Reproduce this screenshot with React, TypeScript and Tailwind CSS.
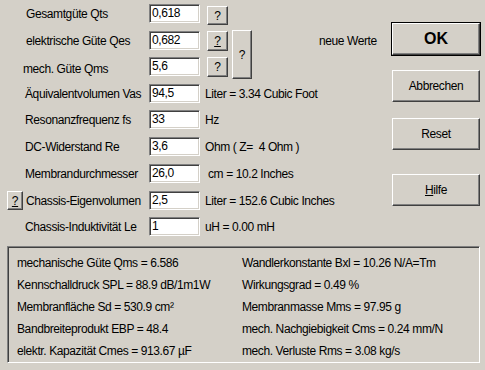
import React from "react";

const font = { fontFamily: '"Liberation Sans", Arial, sans-serif' };

function Field({ value }: { value: string }) {
  return (
    <div className="h-[19px] w-[51px] bg-white border border-t-[#808080] border-l-[#808080] border-b-white border-r-white shadow-[inset_1px_1px_0_#404040,inset_-1px_-1px_0_#d4d0c8] pl-[2px] leading-[17px] text-[12px] tracking-[-0.4px] text-black">
      {value}
    </div>
  );
}

function QBtn({ underline, className }: { underline?: boolean; className?: string }) {
  return (
    <div
      className={
        "flex items-center justify-center bg-[#d4d0c8] border border-t-white border-l-white border-b-[#404040] border-r-[#404040] shadow-[inset_-1px_-1px_0_#808080] text-[12px] text-black " +
        (className || "")
      }
    >
      <span className={underline ? "underline" : ""}>?</span>
    </div>
  );
}

function BigBtn({ children, isDefault }: { children: React.ReactNode; isDefault?: boolean }) {
  return (
    <div
      className={
        "h-[32px] w-[88px] flex items-center justify-center bg-[#d4d0c8] border border-t-white border-l-white border-b-[#404040] border-r-[#404040] shadow-[inset_-1px_-1px_0_#808080] text-black " +
        (isDefault ? "outline outline-1 outline-black text-[16px] font-bold" : "text-[12px] tracking-[-0.4px]")
      }
    >
      {children}
    </div>
  );
}

const labelCls = "h-[19px] flex items-center text-[12px] tracking-[-0.4px] whitespace-nowrap";
const unitCls = "h-[19px] flex items-center text-[12px] tracking-[-0.4px] whitespace-nowrap col-start-3 col-span-5 pl-[5px]";

export default function App() {
  return (
    <div className="w-[485px] h-[370px] bg-[#d4d0c8] text-black flex flex-col overflow-hidden" style={font}>
      <div className="flex h-[246px]">
        <div className="w-[392px] pt-[4px] grid grid-cols-[149px_51px_7px_21px_4px_20px_1fr] grid-rows-[27px_26px_27px_26px_27px_27px_27px_26px_27px] items-start">
          {/* row 1 */}
          <div className={labelCls + " pl-[26px]"}>Gesamtgüte Qts</div>
          <Field value="0,618" />
          <div />
          <QBtn className="h-[19px] mt-[2px] col-start-4" />
          <div className="col-span-3" />

          {/* row 2 */}
          <div className={labelCls + " pl-[26px]"}>elektrische Güte Qes</div>
          <Field value="0,682" />
          <div />
          <QBtn underline className="h-[20px] col-start-4" />
          <div />
          <QBtn className="row-span-2 h-[49px] mt-[-1px] col-start-6" />
          <div className={labelCls + " pl-[67px]"}>neue Werte</div>

          {/* row 3 */}
          <div className={labelCls + " pl-[23px] mt-[2px] col-start-1"}>mech. Güte Qms</div>
          <Field value="5,6" />
          <div />
          <QBtn className="h-[20px] col-start-4" />

          {/* row 4 */}
          <div className={labelCls + " pl-[25px] col-start-1"}>Äquivalentvolumen Vas</div>
          <Field value="94,5" />
          <div className={unitCls}>Liter = 3.34 Cubic Foot</div>

          {/* row 5 */}
          <div className={labelCls + " pl-[25px] col-start-1"}>Resonanzfrequenz fs</div>
          <Field value="33" />
          <div className={unitCls}>Hz</div>

          {/* row 6 */}
          <div className={labelCls + " pl-[25px] col-start-1"}>DC-Widerstand Re</div>
          <Field value="3,6" />
          <div className={unitCls}>Ohm ( Z=&nbsp; 4 Ohm )</div>

          {/* row 7 */}
          <div className={labelCls + " pl-[25px] col-start-1"}>Membrandurchmesser</div>
          <Field value="26,0" />
          <div className={unitCls + " pl-[8px]"}>cm = 10.2 Inches</div>

          {/* row 8 */}
          <div className={labelCls + " pl-[7px] gap-[3px] col-start-1"}>
            <QBtn underline className="h-[19px] w-[16px]" />
            <span>Chassis-Eigenvolumen</span>
          </div>
          <Field value="2,5" />
          <div className={unitCls}>Liter = 152.6 Cubic Inches</div>

          {/* row 9 */}
          <div className={labelCls + " pl-[25px] col-start-1"}>Chassis-Induktivität Le</div>
          <Field value="1" />
          <div className={unitCls}>uH = 0.00 mH</div>
        </div>

        <div className="w-[88px] flex flex-col pt-[23px]">
          <BigBtn isDefault>OK</BigBtn>
          <div className="h-[15px]" />
          <BigBtn>Abbrechen</BigBtn>
          <div className="h-[16px]" />
          <BigBtn>Reset</BigBtn>
          <div className="h-[24px]" />
          <BigBtn>
            <span>
              <span className="underline">H</span>ilfe
            </span>
          </BigBtn>
        </div>
      </div>

      <div className="ml-[7px] w-[473px] h-[117px] border border-t-[#808080] border-l-[#808080] border-b-white border-r-white shadow-[inset_1px_1px_0_#404040,inset_-1px_-1px_0_#d4d0c8] pt-[5px] px-[9px] grid grid-cols-[225px_1fr] auto-rows-[22px] text-[12px] tracking-[-0.4px] whitespace-nowrap">
        <div className="flex items-center">mechanische Güte Qms = 6.586</div>
        <div className="flex items-center">Wandlerkonstante Bxl = 10.26 N/A=Tm</div>
        <div className="flex items-center">Kennschalldruck SPL = 88.9 dB/1m1W</div>
        <div className="flex items-center">Wirkungsgrad = 0.49 %</div>
        <div className="flex items-center">Membranfläche Sd = 530.9 cm²</div>
        <div className="flex items-center">Membranmasse Mms = 97.95 g</div>
        <div className="flex items-center">Bandbreiteprodukt EBP = 48.4</div>
        <div className="flex items-center">mech. Nachgiebigkeit Cms = 0.24 mm/N</div>
        <div className="flex items-center">elektr. Kapazität Cmes = 913.67 µF</div>
        <div className="flex items-center">mech. Verluste Rms = 3.08 kg/s</div>
      </div>
    </div>
  );
}
